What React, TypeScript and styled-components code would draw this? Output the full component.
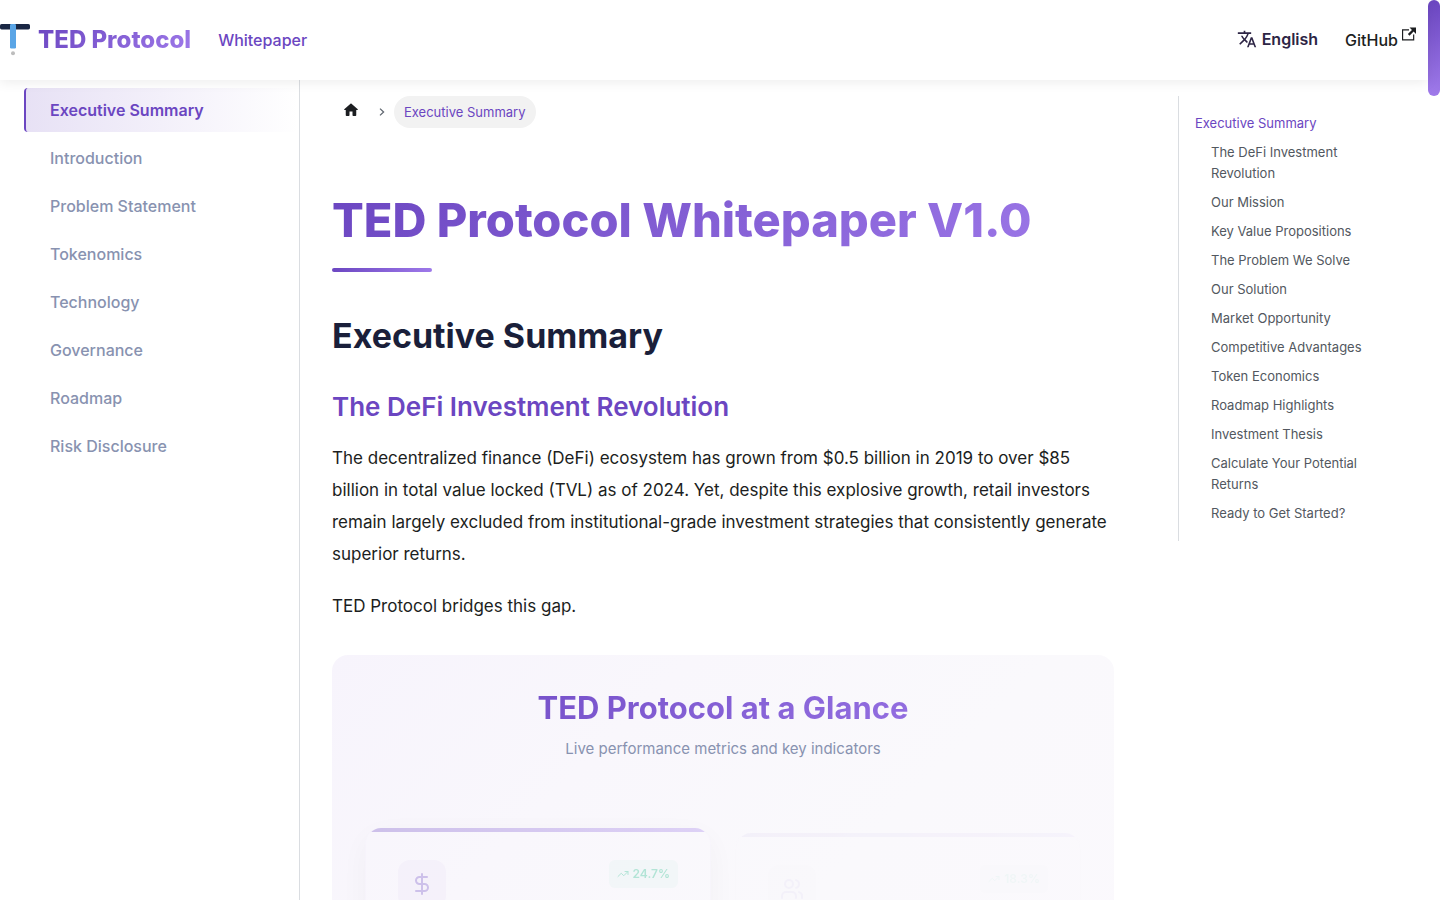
import React from "react";
import styled, { createGlobalStyle, css } from "styled-components";
import { DollarSign, TrendingUp, Users } from "lucide-react";

const purple = "#6b46c1";
const gradient = "linear-gradient(135deg, #6b46c1 0%, #9f7aea 100%)";

const GlobalStyle = createGlobalStyle`
  *, *::before, *::after { box-sizing: border-box; }
  body {
    margin: 0;
    background: #fff;
    color: #1c1e21;
    font-family: Inter, "Liberation Sans", sans-serif;
    font-size: 16px;
    -webkit-font-smoothing: antialiased;
  }
  a { color: inherit; text-decoration: none; }
  ul, ol { list-style: none; margin: 0; padding: 0; }
  h1, h2, h3, p { margin: 0; }
`;

const gradientText = css`
  background: ${gradient};
  background-clip: text;
  -webkit-background-clip: text;
  color: transparent;
`;

const Shell = styled.div`
  display: flex;
  height: 100vh;
`;

const Page = styled.div`
  flex: 1;
  min-width: 0;
  display: flex;
  flex-direction: column;
`;

const ScrollRail = styled.div`
  flex: 0 0 12px;
  background: #fff;
`;

const ScrollThumb = styled.div`
  height: 96px;
  border-radius: 6px;
  background: linear-gradient(180deg, #6b46c1, #9f7aea);
`;

const Navbar = styled.nav`
  flex: 0 0 80px;
  position: relative;
  z-index: 2;
  display: flex;
  align-items: center;
  justify-content: space-between;
  padding-right: 12px;
  background: #fff;
  box-shadow: 0 2px 12px rgba(0, 0, 0, 0.08);
`;

const NavGroup = styled.div`
  display: flex;
  align-items: center;
`;

const Brand = styled.a`
  display: flex;
  align-items: center;
  gap: 8px;
  margin-right: 27px;
`;

const BrandName = styled.b`
  font-size: 24px;
  line-height: 32px;
  font-weight: 800;
  ${gradientText}
`;

const NavLink = styled.a<{ $active?: boolean }>`
  display: flex;
  align-items: center;
  gap: 4px;
  font-weight: 500;
  line-height: 24px;
  color: ${(p) => (p.$active ? purple : "#1c1e21")};
  svg { margin-bottom: 12px; }
`;

const LocaleButton = styled.button`
  display: flex;
  align-items: center;
  gap: 5px;
  margin-right: 24px;
  padding: 0 3px 2px;
  border: 0;
  background: #fff;
  color: #2d2545;
  font: inherit;
  font-weight: 600;
  line-height: 22px;
`;

const Body = styled.div`
  flex: 1;
  min-height: 0;
  display: flex;
`;

const Sidebar = styled.aside`
  flex: 0 0 300px;
  border-right: 1px solid #dadde1;
  padding: 8px 0 8px 24px;
`;

const SideList = styled.ul`
  display: flex;
  flex-direction: column;
  gap: 4px;
`;

const SideLink = styled.a<{ $active?: boolean }>`
  display: block;
  padding: 10px 24px;
  line-height: 24px;
  font-weight: 500;
  color: #8892b0;
  border-left: 2px solid transparent;
  border-radius: 4px;
  ${(p) =>
    p.$active &&
    css`
      color: ${purple};
      font-weight: 600;
      border-left-color: ${purple};
      background: linear-gradient(90deg, rgba(107, 70, 193, 0.16), rgba(107, 70, 193, 0));
    `}
`;

const Main = styled.main`
  flex: 1;
  min-width: 0;
  display: flex;
  align-items: flex-start;
  overflow-y: auto;
  scrollbar-width: none;
`;

const Article = styled.article`
  flex: 0 0 75%;
  min-width: 0;
  padding: 16px 32px;
`;

const Crumbs = styled.ol`
  display: flex;
  align-items: center;
  height: 32px;
`;

const CrumbHome = styled.a`
  display: flex;
  padding: 0 10px 4px;
`;

const CrumbSeparator = styled.li`
  display: flex;
  padding: 0 7px;
  color: #606770;
`;

const CrumbCurrent = styled.span`
  display: block;
  padding: 6px 10px 5px;
  border-radius: 16px;
  background: #f2f2f2;
  color: ${purple};
  font-size: 13px;
  line-height: 21px;
`;

const Title = styled.h1`
  margin-top: 60px;
  font-size: 47px;
  line-height: 64px;
  font-weight: 800;
  ${gradientText}
`;

const TitleRule = styled.div`
  width: 100px;
  height: 4px;
  margin-top: 16px;
  border-radius: 2px;
  background: ${gradient};
`;

const SectionTitle = styled.h2`
  margin-top: 40px;
  font-size: 34px;
  line-height: 48px;
  font-weight: 700;
  color: #1a1f3a;
`;

const SubTitle = styled.h3`
  margin-top: 32px;
  font-size: 26px;
  line-height: 30px;
  font-weight: 600;
  color: ${purple};
`;

const Copy = styled.p`
  margin-top: 20px;
  font-size: 17px;
  line-height: 32px;
`;

const Glance = styled.section`
  margin-top: 33px;
  padding: 33px;
  border-radius: 16px;
  background: linear-gradient(135deg, #f7f4fc 0%, #f9f7fc 30%, #faf9fc 60%, #fbf9fd 100%);
`;

const GlanceTitle = styled.h2`
  font-size: 31px;
  line-height: 40px;
  font-weight: 700;
  text-align: center;
  ${gradientText}
`;

const GlanceNote = styled.p`
  margin: 9px 0 67px;
  font-size: 15px;
  line-height: 24px;
  text-align: center;
  color: #8892b0;
`;

const Metrics = styled.div`
  display: grid;
  grid-template-columns: 1fr 1fr;
  gap: 24px;
`;

const MetricCard = styled.div<{ $opacity: number; $shift: number }>`
  position: relative;
  overflow: hidden;
  height: 220px;
  padding: 32px;
  border: 1px solid rgba(107, 70, 193, 0.05);
  border-top: 0;
  border-radius: 16px;
  background: #fbf9fd;
  box-shadow: 0 8px 32px rgba(0, 0, 0, 0.12);
  opacity: ${(p) => p.$opacity};
  transform: translateY(${(p) => p.$shift}px);
  &::before {
    content: "";
    position: absolute;
    inset: 0 0 auto;
    height: 4px;
    background: ${gradient};
  }
`;

const MetricHead = styled.div`
  display: flex;
  align-items: flex-start;
  justify-content: space-between;
`;

const MetricIcon = styled.div`
  display: grid;
  place-items: center;
  width: 48px;
  height: 48px;
  border-radius: 12px;
  background: rgba(107, 70, 193, 0.1);
  color: ${purple};
`;

const Change = styled.span`
  display: flex;
  align-items: center;
  gap: 4px;
  padding: 4px 8px;
  border-radius: 6px;
  background: rgba(16, 185, 129, 0.1);
  color: #10b981;
  font-size: 12px;
  line-height: 20px;
  font-weight: 600;
`;

const TocColumn = styled.aside`
  flex: 0 0 25%;
  padding: 16px 32px;
`;

const TocList = styled.ul`
  display: flex;
  flex-direction: column;
  gap: 8px;
  padding: 17px 16px;
  border-left: 1px solid #dadde1;
  font-size: 13px;
  line-height: 21px;
  color: #525860;
`;

const TocItem = styled.li<{ $top?: boolean }>`
  padding-left: ${(p) => (p.$top ? 0 : 16)}px;
  color: ${(p) => (p.$top ? purple : "inherit")};
`;

const Logo = () => (
  <svg width="30" height="32" viewBox="0 0 30 32" aria-hidden="true">
    <rect x="0" y="0" width="30" height="5.4" rx="1.6" fill="#1a2744" />
    <rect x="10" y="0" width="6" height="24.4" rx="1.2" fill="#5aa5e6" />
    <circle cx="13" cy="29.3" r="2" fill="#bdbdbd" />
  </svg>
);

const TranslateIcon = () => (
  <svg width="20" height="20" viewBox="0 0 24 24" fill="currentColor" aria-hidden="true">
    <path d="M12.87 15.07l-2.54-2.51.03-.03c1.74-1.94 2.98-4.17 3.71-6.53H17V4h-7V2H8v2H1v1.99h11.17C11.5 7.92 10.44 9.75 9 11.35 8.07 10.32 7.3 9.19 6.69 8h-2c.73 1.63 1.73 3.17 2.98 4.56l-5.09 5.02L4 19l5-5 3.11 3.11.76-2.04zM18.5 10h-2L12 22h2l1.12-3h4.75L21 22h2l-4.5-12zm-2.62 7l1.62-4.33L19.12 17h-3.24z" />
  </svg>
);

const ExternalIcon = () => (
  <svg width="14" height="14" viewBox="0 0 24 24" fill="currentColor" aria-hidden="true">
    <path d="M21 13v10h-21v-19h12v2h-10v15h17v-8h2zm3-12h-10.988l4.035 4-6.977 7.07 2.828 2.828 6.977-7.07 4.125 4.172v-11z" />
  </svg>
);

const HomeIcon = () => (
  <svg width="18" height="18" viewBox="0 0 24 24" fill="currentColor" aria-hidden="true">
    <path d="M10 19v-5h4v5c0 .55.45 1 1 1h3c.55 0 1-.45 1-1v-7h1.7c.46 0 .68-.57.33-.87L12.67 3.6c-.38-.34-.96-.34-1.34 0l-8.36 7.53c-.34.3-.13.87.33.87H5v7c0 .55.45 1 1 1h3c.55 0 1-.45 1-1z" />
  </svg>
);

const ChevronIcon = () => (
  <svg width="10" height="10" viewBox="0 0 10 10" fill="none" stroke="currentColor" strokeWidth="1.3" aria-hidden="true">
    <path d="M3 1.6L6.6 5L3 8.4" />
  </svg>
);

const chapters = [
  "Executive Summary",
  "Introduction",
  "Problem Statement",
  "Tokenomics",
  "Technology",
  "Governance",
  "Roadmap",
  "Risk Disclosure",
];

const sections = [
  "Executive Summary",
  "The DeFi Investment Revolution",
  "Our Mission",
  "Key Value Propositions",
  "The Problem We Solve",
  "Our Solution",
  "Market Opportunity",
  "Competitive Advantages",
  "Token Economics",
  "Roadmap Highlights",
  "Investment Thesis",
  "Calculate Your Potential Returns",
  "Ready to Get Started?",
];

const metrics = [
  { Icon: DollarSign, change: "24.7%", opacity: 0.3, shift: 0 },
  { Icon: Users, change: "18.3%", opacity: 0.04, shift: 5 },
];

export default function App() {
  return (
    <>
      <GlobalStyle />
      <Shell>
        <Page>
          <Navbar aria-label="Main">
            <NavGroup>
              <Brand href="#">
                <Logo />
                <BrandName>TED Protocol</BrandName>
              </Brand>
              <NavLink href="#" $active>
                Whitepaper
              </NavLink>
            </NavGroup>
            <NavGroup>
              <LocaleButton type="button">
                <TranslateIcon />
                English
              </LocaleButton>
              <NavLink href="#">
                GitHub
                <ExternalIcon />
              </NavLink>
            </NavGroup>
          </Navbar>
          <Body>
            <Sidebar>
              <SideList>
                {chapters.map((name, i) => (
                  <li key={name}>
                    <SideLink href="#" $active={i === 0}>
                      {name}
                    </SideLink>
                  </li>
                ))}
              </SideList>
            </Sidebar>
            <Main>
              <Article>
                <Crumbs aria-label="Breadcrumbs">
                  <li>
                    <CrumbHome href="#" aria-label="Home page">
                      <HomeIcon />
                    </CrumbHome>
                  </li>
                  <CrumbSeparator aria-hidden="true">
                    <ChevronIcon />
                  </CrumbSeparator>
                  <li>
                    <CrumbCurrent>Executive Summary</CrumbCurrent>
                  </li>
                </Crumbs>
                <Title>TED Protocol Whitepaper V1.0</Title>
                <TitleRule />
                <SectionTitle>Executive Summary</SectionTitle>
                <SubTitle>The DeFi Investment Revolution</SubTitle>
                <Copy>
                  The decentralized finance (DeFi) ecosystem has grown from $0.5 billion in 2019 to over $85 billion in
                  total value locked (TVL) as of 2024. Yet, despite this explosive growth, retail investors remain
                  largely excluded from institutional-grade investment strategies that consistently generate superior
                  returns.
                </Copy>
                <Copy>TED Protocol bridges this gap.</Copy>
                <Glance>
                  <GlanceTitle>TED Protocol at a Glance</GlanceTitle>
                  <GlanceNote>Live performance metrics and key indicators</GlanceNote>
                  <Metrics>
                    {metrics.map(({ Icon, change, opacity, shift }) => (
                      <MetricCard key={change} $opacity={opacity} $shift={shift}>
                        <MetricHead>
                          <MetricIcon>
                            <Icon size={24} />
                          </MetricIcon>
                          <Change>
                            <TrendingUp size={12} />
                            {change}
                          </Change>
                        </MetricHead>
                      </MetricCard>
                    ))}
                  </Metrics>
                </Glance>
              </Article>
              <TocColumn>
                <TocList>
                  {sections.map((name, i) => (
                    <TocItem key={name} $top={i === 0}>
                      <a href="#">{name}</a>
                    </TocItem>
                  ))}
                </TocList>
              </TocColumn>
            </Main>
          </Body>
        </Page>
        <ScrollRail aria-hidden="true">
          <ScrollThumb />
        </ScrollRail>
      </Shell>
    </>
  );
}
